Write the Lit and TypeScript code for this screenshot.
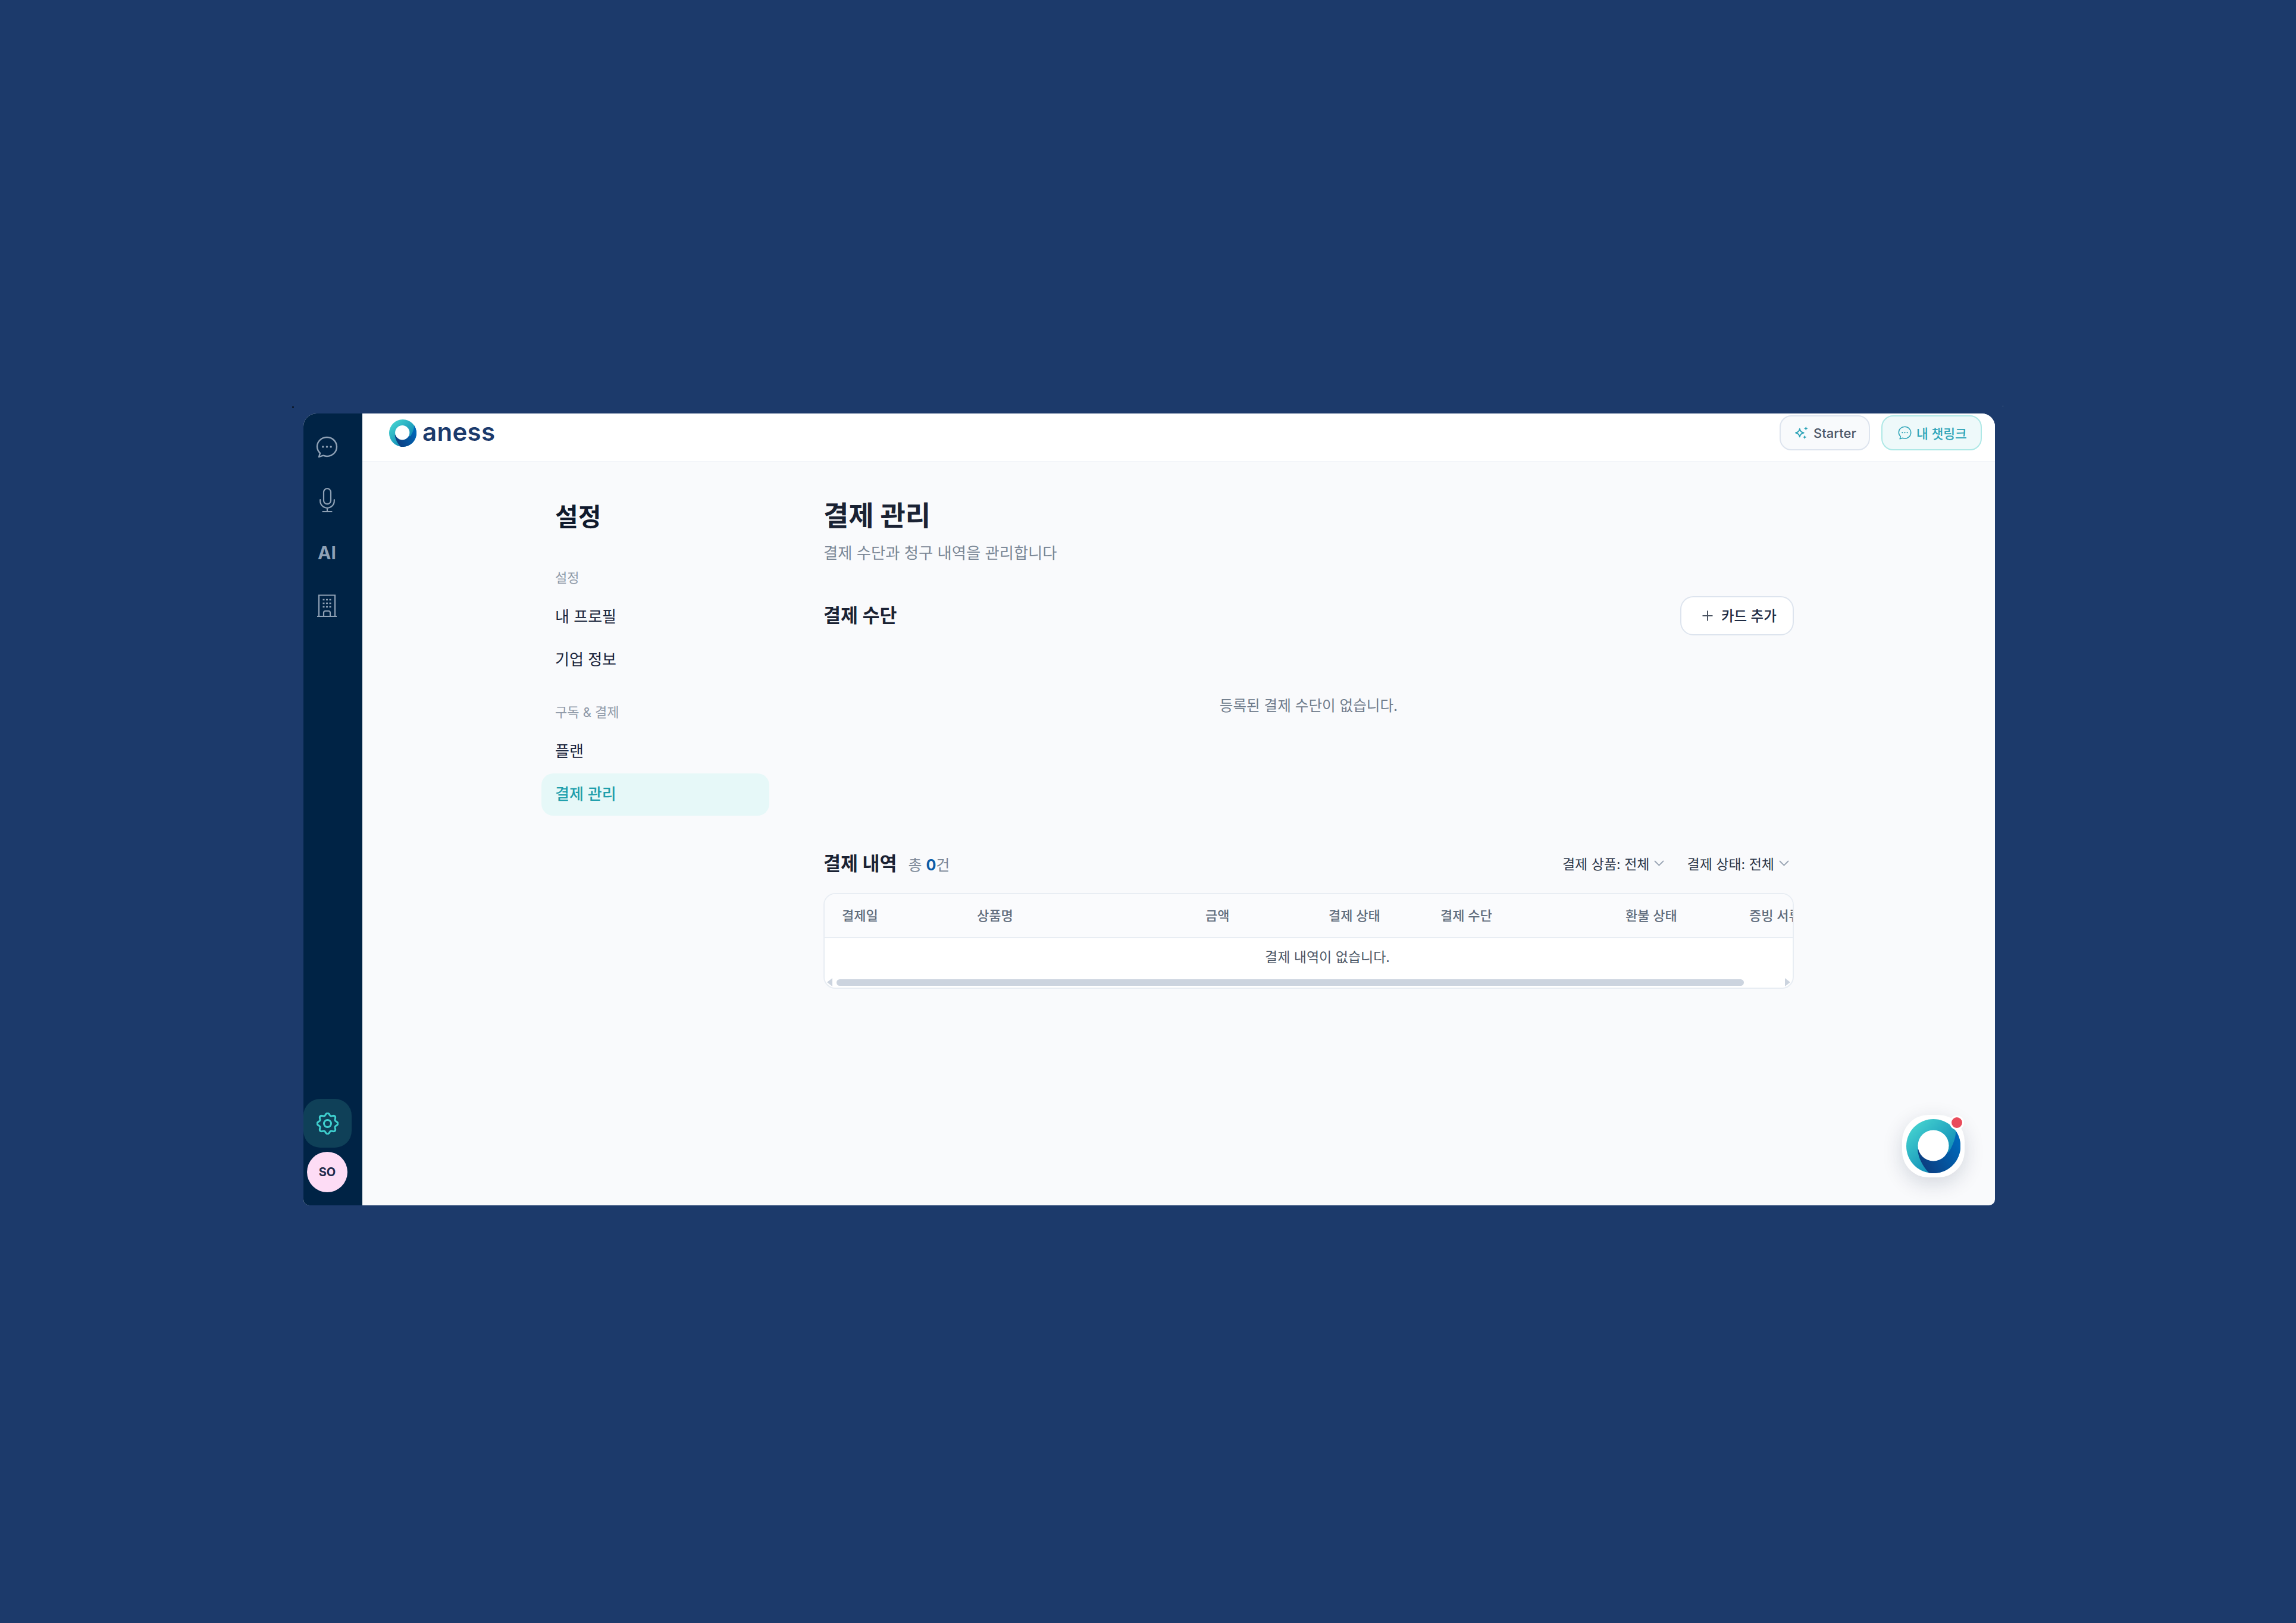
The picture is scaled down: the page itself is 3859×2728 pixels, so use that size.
import { LitElement, html, css, svg } from "lit";
import { customElement } from "lit/decorators.js";

const chatPath = "M18 2C9 2 2 8.6 2 17c0 4.3 1.8 8 4.8 10.8L5 34l7-2.2c2 .8 4 1.2 6 1.2 9 0 16-7 16-15.5S27 2 18 2z";

function chatIcon(cls: string) {
  return html`<svg class=${cls} viewBox="0 0 36 36" fill="none" stroke="currentColor" stroke-width="2.4" stroke-linejoin="round">
    <path d=${chatPath}></path>
    <circle cx="11.5" cy="17.5" r="1.7" fill="currentColor" stroke="none"></circle>
    <circle cx="18" cy="17.5" r="1.7" fill="currentColor" stroke="none"></circle>
    <circle cx="24.5" cy="17.5" r="1.7" fill="currentColor" stroke="none"></circle>
  </svg>`;
}

function ringMark(id: string, cls: string, holeR: number, cx: number, cy: number) {
  return html`<svg class=${cls} viewBox="0 0 91 91">
    <defs>
      <linearGradient id="${id}a" x1="0.1" y1="0.1" x2="0.75" y2="0.8">
        <stop offset="0" stop-color="#45d3d0"></stop>
        <stop offset="1" stop-color="#0b86b4"></stop>
      </linearGradient>
      <linearGradient id="${id}b" x1="0.1" y1="0.9" x2="1" y2="0.4">
        <stop offset="0" stop-color="#0c3c7e"></stop>
        <stop offset="1" stop-color="#0067b8"></stop>
      </linearGradient>
    </defs>
    <circle cx="45.5" cy="45.5" r="45.5" fill="url(#${id}a)"></circle>
    <path d="M83 19.5A45.5 45.5 0 0 1 38 90.4C28 80 20 65 19 51L71 56C78 45 84 30 83 19.5z" fill="url(#${id}b)"></path>
    <circle cx=${cx} cy=${cy} r=${holeR} fill="#fff"></circle>
  </svg>`;
}

function gearPath() {
  const pts: string[] = [];
  const n = 144;
  for (let i = 0; i < n; i++) {
    const t = (i / n) * Math.PI * 2;
    const r = 15.6 + 1.9 * Math.cos(8 * t);
    const x = 18.5 + r * Math.sin(t);
    const y = 18.5 - r * Math.cos(t);
    pts.push(`${x.toFixed(2)} ${y.toFixed(2)}`);
  }
  return "M" + pts.join("L") + "z";
}

const columns = ["결제일", "상품명", "금액", "결제 상태", "결제 수단", "환불 상태", "증빙 서류"];

@customElement("app-root")
export class AppRoot extends LitElement {
  static styles = css`
    :host {
      display: block;
      position: relative;
      min-height: 2728px;
      background: #1c3a6b;
      padding: 695px 0 0 510px;
      box-sizing: border-box;
      font-family: Inter, "Noto Sans CJK KR", sans-serif;
    }
    .speck-dark { position: absolute; left: 491px; top: 683px; width: 3px; height: 3px; background: #0d1c33; }
    .speck-light { position: absolute; left: 3366px; top: 682px; width: 1px; height: 1px; background: #cfd8e6; }
    .window {
      position: relative;
      display: flex;
      width: 2843px;
      height: 1331px;
      border-radius: 22px 22px 10px 10px;
      overflow: hidden;
      background: #f9fafc;
    }
    .rail {
      width: 99px;
      flex: none;
      background: #002345;
      display: flex;
      flex-direction: column;
      justify-content: space-between;
      padding: 15px 0 22px;
      box-sizing: border-box;
      color: #8fa1b5;
    }
    .rail-group { display: flex; flex-direction: column; gap: 7px; width: 81px; }
    .rail-bottom { gap: 7px; }
    .rail-item {
      width: 79px;
      height: 82px;
      display: flex;
      align-items: center;
      justify-content: center;
      border-radius: 28px;
    }
    .ic-chat { width: 37px; height: 37px; }
    .ic-mic { width: 26px; height: 41px; }
    .ic-building { width: 33px; height: 38px; }
    .ic-gear { width: 37px; height: 37px; }
    .ai { font-size: 30px; font-weight: 700; line-height: 1; }
    .rail-active { width: 81px; background: #0f4058; color: #3fd0cf; }
    .avatar {
      width: 68px;
      height: 68px;
      margin-left: 6px;
      border-radius: 50%;
      background: #fddcf5;
      color: #1e2a4a;
      font-size: 20px;
      font-weight: 700;
      display: flex;
      align-items: center;
      justify-content: center;
    }
    .stage { flex: 1; display: flex; flex-direction: column; min-width: 0; }
    .topbar {
      height: 81px;
      flex: none;
      box-sizing: border-box;
      background: #fff;
      border-bottom: 1px solid #f2f4f8;
      display: flex;
      justify-content: space-between;
      align-items: flex-start;
      padding: 3px 22px 0 45px;
    }
    .brand { display: flex; align-items: center; gap: 10px; margin-top: 7px; height: 46px; }
    .brand-mark { width: 46px; height: 46px; }
    .brand-name { font-size: 42px; font-weight: 600; color: #1b3a6c; letter-spacing: 0.3px; line-height: 46px; margin-top: -5px; }
    .top-actions { display: flex; gap: 19px; }
    .chip {
      height: 59px;
      box-sizing: border-box;
      border-radius: 20px;
      display: flex;
      align-items: center;
      font-weight: 500;
      font-size: 22px;
      gap: 8px;
    }
    .chip-plan { width: 152px; padding-left: 24px; background: #f8fafc; border: 2px solid #dde4ee; color: #4b5668; }
    .chip-link { width: 169px; padding-left: 26px; background: #eef9fa; border: 2px solid #aee8e6; color: #2fa5b8; font-size: 21.5px; }
    .ic-spark { width: 23px; height: 23px; color: #2fa5b8; flex: none; }
    .ic-chat-small { width: 23px; height: 23px; flex: none; }
    .body { flex: 1; display: flex; padding-left: 301px; min-height: 0; }
    .side { width: 383px; flex: none; padding-top: 63px; }
    .side-title { font-size: 42px; font-weight: 700; line-height: 60px; color: #101a2d; padding-left: 23px; }
    .side-group { display: flex; flex-direction: column; gap: 0; }
    .side-group-first { margin-top: 57px; }
    .side-group-next { margin-top: 37px; }
    .side-label { height: 30px; line-height: 30px; font-size: 22px; color: #8f99a8; padding-left: 23px; margin-bottom: 16px; }
    .side-item { height: 71px; box-sizing: border-box; line-height: 69px; padding-bottom: 2px; font-size: 26px; font-weight: 400; color: #18233a; padding-left: 23px; border-radius: 20px; margin-bottom: 0.5px; }
    .side-active { background: #e6f8f8; color: #1f9fac; font-weight: 500; }
    .main { width: 1631px; margin-left: 91px; flex: none; padding-top: 60px; }
    .page-title { font-size: 46px; font-weight: 700; line-height: 60px; color: #1a2233; }
    .page-sub { margin-top: 16px; font-size: 26.3px; line-height: 36px; color: #7a8796; }
    .section-head { margin-top: 54px; display: flex; justify-content: space-between; align-items: center; height: 66px; }
    .section-title { font-size: 31.5px; font-weight: 700; color: #1a2233; line-height: 40px; }
    .add {
      width: 191px;
      height: 66px;
      box-sizing: border-box;
      background: #fff;
      border: 2px solid #dde4ee;
      border-radius: 22px;
      display: flex;
      align-items: center;
      padding: 0 0 3px 34px;
      gap: 13px;
      font-size: 23.5px;
      font-weight: 500;
      color: #1e2a42;
    }
    .ic-plus { width: 20px; height: 20px; color: #4b5563; flex: none; margin-top: 3px; }
    .empty { height: 232px; display: flex; align-items: center; justify-content: center; font-size: 24.6px; color: #6f7c8c; padding-bottom: 1px; box-sizing: border-box; }
    .history-head { margin-top: 132px; height: 40px; display: flex; align-items: center; justify-content: space-between; }
    .history-left { display: flex; align-items: center; gap: 19px; }
    .count { font-size: 25px; color: #7a8796; }
    .count b { color: #0b5ca8; font-weight: 700; }
    .filters { display: flex; gap: 38px; padding: 0 8px 2px 0; }
    .filter { display: flex; align-items: center; gap: 8px; font-size: 23px; color: #2c3648; }
    .ic-chev { width: 17px; height: 10px; color: #9aa5b4; }
    .table {
      margin-top: 29px;
      height: 161px;
      box-sizing: border-box;
      border: 2px solid #e8edf3;
      border-radius: 20px;
      overflow: hidden;
      background: #fff;
      display: flex;
      flex-direction: column;
    }
    .thead {
      width: 1690px;
      height: 74px;
      flex: none;
      box-sizing: border-box;
      background: #fafbfd;
      border-bottom: 2px solid #e8edf3;
      display: grid;
      grid-template-columns: 227px 384px 207px 188px 311px 208px 120px;
      align-items: center;
      padding: 0 0 4px 29px;
      font-size: 22px;
      font-weight: 500;
      color: #5f6c7c;
      white-space: nowrap;
    }
    .trow { width: 1690px; height: 62px; flex: none; box-sizing: border-box; padding-bottom: 2px; display: flex; align-items: center; justify-content: center; font-size: 23px; color: #4a5565; }
    .scroll { flex: 1; display: flex; align-items: center; padding: 3px 4px 0 4px; gap: 7px; }
    .track { flex: 1; height: 11px; display: flex; }
    .thumb { width: 1525px; height: 11px; border-radius: 6px; background: #ccd4df; }
    .arrow { width: 9px; height: 14px; color: #ccd4df; flex: none; }
    .fab {
      position: absolute;
      left: 2687px;
      top: 1179px;
      width: 105px;
      height: 105px;
      border-radius: 44px;
      background: #fff;
      box-shadow: 0 10px 34px rgba(15, 30, 60, 0.16);
      display: flex;
      align-items: center;
      justify-content: center;
    }
    .fab-mark { width: 91px; height: 91px; }
    .fab-dot {
      position: absolute;
      left: 80px;
      top: 1px;
      width: 18px;
      height: 18px;
      border-radius: 50%;
      background: #e94b5b;
      border: 3px solid #fff;
    }
  `;

  render() {
    return html`
      <i class="speck-dark"></i><i class="speck-light"></i>
      <div class="window">
        <aside class="rail">
          <div class="rail-group">
            <div class="rail-item">${chatIcon("ic-chat")}</div>
            <div class="rail-item">
              <svg class="ic-mic" viewBox="0 0 26 41" fill="none" stroke="currentColor" stroke-width="2.2" stroke-linecap="round">
                <rect x="7" y="1.2" width="12" height="26" rx="6"></rect>
                <path d="M1.2 20v2a11.8 11.8 0 0 0 23.6 0v-2M13 34v6M5.5 40h15"></path>
              </svg>
            </div>
            <div class="rail-item"><span class="ai">AI</span></div>
            <div class="rail-item">
              <svg class="ic-building" viewBox="0 0 33 38" fill="none" stroke="currentColor" stroke-width="2.2">
                <path d="M3 37V1.5h27V37M0 37h33M11 37v-6a3 3 0 0 1 3-3h5a3 3 0 0 1 3 3v6"></path>
                <path d="M9.5 9h3M15 9h3M20.5 9h3M9.5 15h3M15 15h3M20.5 15h3M9.5 21h3M15 21h3M20.5 21h3" stroke-width="2.6"></path>
              </svg>
            </div>
          </div>
          <div class="rail-group rail-bottom">
            <div class="rail-item rail-active">
              <svg class="ic-gear" viewBox="0 0 37 37" fill="none" stroke="currentColor" stroke-width="3" stroke-linejoin="round">
                ${svg`<path d=${gearPath()}></path><circle cx="18.5" cy="18.5" r="6"></circle>`}
              </svg>
            </div>
            <div class="avatar">SO</div>
          </div>
        </aside>
        <div class="stage">
          <header class="topbar">
            <div class="brand">
              ${ringMark("logo", "brand-mark", 24, 44, 44)}
              <span class="brand-name">aness</span>
            </div>
            <div class="top-actions">
              <div class="chip chip-plan">
                <svg class="ic-spark" viewBox="0 0 22 22" fill="none" stroke="currentColor" stroke-width="1.8" stroke-linejoin="round">
                  <path d="M7.5 4.500c.7 3.800 2.300 5.600 6.500 6.500-4.200.9-5.800 2.700-6.500 6.500C6.800 13.700 5.200 11.900 1 11c4.200-.9 5.800-2.700 6.500-6.500z"></path>
                  <path d="M17.500 .5c.4 2.200 1.300 3.100 3.500 3.500-2.200.4-3.100 1.300-3.500 3.500-.4-2.200-1.300-3.100-3.500-3.500 2.200-.4 3.100-1.300 3.500-3.500zM15.500 14.500c.4 2.200 1.300 3.100 3.500 3.500-2.200.4-3.100 1.300-3.500 3.500-.4-2.200-1.300-3.100-3.500-3.500 2.200-.4 3.100-1.300 3.500-3.500z" fill="currentColor" stroke="none"></path>
                </svg>
                Starter
              </div>
              <div class="chip chip-link">${chatIcon("ic-chat-small")}내 챗링크</div>
            </div>
          </header>
          <div class="body">
            <nav class="side">
              <div class="side-title">설정</div>
              <div class="side-group side-group-first">
                <div class="side-label">설정</div>
                <div class="side-item">내 프로필</div>
                <div class="side-item">기업 정보</div>
              </div>
              <div class="side-group side-group-next">
                <div class="side-label">구독 &amp; 결제</div>
                <div class="side-item">플랜</div>
                <div class="side-item side-active">결제 관리</div>
              </div>
            </nav>
            <main class="main">
              <div class="page-title">결제 관리</div>
              <div class="page-sub">결제 수단과 청구 내역을 관리합니다</div>
              <div class="section-head">
                <div class="section-title">결제 수단</div>
                <div class="add">
                  <svg class="ic-plus" viewBox="0 0 20 20" fill="none" stroke="currentColor" stroke-width="2"><path d="M10 1.500v17M1.500 10h17"></path></svg>
                  카드 추가
                </div>
              </div>
              <div class="empty">등록된 결제 수단이 없습니다.</div>
              <div class="history-head">
                <div class="history-left">
                  <div class="section-title">결제 내역</div>
                  <div class="count">총 <b>0</b>건</div>
                </div>
                <div class="filters">
                  ${["결제 상품: 전체", "결제 상태: 전체"].map(
                    (t) => html`<div class="filter">${t}
                      <svg class="ic-chev" viewBox="0 0 17 10" fill="none" stroke="currentColor" stroke-width="1.8"><path d="M1 1l7.500 7.500L16 1"></path></svg>
                    </div>`
                  )}
                </div>
              </div>
              <div class="table">
                <div class="thead">${columns.map((c) => html`<div>${c}</div>`)}</div>
                <div class="trow">결제 내역이 없습니다.</div>
                <div class="scroll">
                  <svg class="arrow" viewBox="0 0 9 14" fill="currentColor"><path d="M9 0v14L0 7z"></path></svg>
                  <div class="track"><div class="thumb"></div></div>
                  <svg class="arrow" viewBox="0 0 9 14" fill="currentColor"><path d="M0 0v14l9-7z"></path></svg>
                </div>
              </div>
            </main>
          </div>
        </div>
        <div class="fab">
          ${ringMark("fab", "fab-mark", 26, 45.5, 44.5)}
          <div class="fab-dot"></div>
        </div>
      </div>
    `;
  }
}
